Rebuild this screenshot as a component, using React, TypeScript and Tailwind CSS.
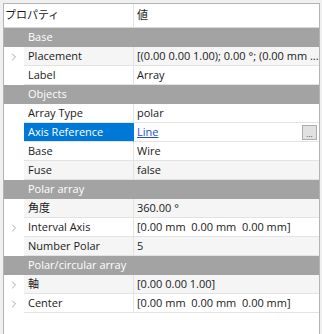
import { ChevronRight } from 'lucide-react'

type Row =
  | { kind: 'group'; label: string }
  | { kind: 'prop'; label: string; value: string; expand?: boolean; alt?: boolean; selected?: boolean; link?: boolean }

const rows: Row[] = [
  { kind: 'group', label: 'Base' },
  { kind: 'prop', label: 'Placement', value: '[(0.00 0.00 1.00); 0.00 °; (0.00 mm ...', expand: true, alt: true },
  { kind: 'prop', label: 'Label', value: 'Array' },
  { kind: 'group', label: 'Objects' },
  { kind: 'prop', label: 'Array Type', value: 'polar' },
  { kind: 'prop', label: 'Axis Reference', value: 'Line', selected: true, link: true },
  { kind: 'prop', label: 'Base', value: 'Wire' },
  { kind: 'prop', label: 'Fuse', value: 'false', alt: true },
  { kind: 'group', label: 'Polar array' },
  { kind: 'prop', label: '角度', value: '360.00 °', alt: true },
  { kind: 'prop', label: 'Interval Axis', value: '[0.00 mm  0.00 mm  0.00 mm]', expand: true },
  { kind: 'prop', label: 'Number Polar', value: '5', alt: true },
  { kind: 'group', label: 'Polar/circular array' },
  { kind: 'prop', label: '軸', value: '[0.00 0.00 1.00]', expand: true, alt: true },
  { kind: 'prop', label: 'Center', value: '[0.00 mm  0.00 mm  0.00 mm]', expand: true },
]

function PropRow({ row }: { row: Row }) {
  if (row.kind === 'group') {
    return (
      <div className="h-[19px] bg-[#a3a3a3] text-white flex items-center pl-[24px]">
        {row.label}
      </div>
    )
  }
  const bg = row.alt ? 'bg-[#f5f5f5]' : 'bg-white'
  return (
    <div className="h-[19px] flex">
      <div className="w-[20px] shrink-0 bg-white flex items-center justify-center text-[#8a8a8a]">
        {row.expand && <ChevronRight size={12} strokeWidth={1.5} />}
      </div>
      <div
        className={`w-[110px] shrink-0 flex items-center px-[4px] border-b border-r border-[#e3e3e3] ${
          row.selected ? 'bg-[#0078d7] text-white border-r-[#0078d7]' : `${bg} text-[#1a1a1a]`
        }`}
      >
        {row.label}
      </div>
      <div className={`flex-1 min-w-0 flex items-center pl-[3px] border-b border-[#e3e3e3] ${row.selected ? 'bg-white' : bg}`}>
        {row.link ? (
          <span className="text-[#1a4fd0] underline flex-1">{row.value}</span>
        ) : (
          <span className="flex-1 whitespace-pre overflow-hidden text-[#1a1a1a]">{row.value}</span>
        )}
        {row.selected && (
          <div className="w-[15px] h-[15px] mr-[2px] bg-[#e1e1e1] border border-[#adadad] flex items-end justify-center text-[8px] leading-[10px] text-[#444]">
            ...
          </div>
        )}
      </div>
    </div>
  )
}

export default function App() {
  return (
    <div
      className="w-[322px] h-[334px] bg-[#f0f0f0] pt-[3px] pl-[3px] pr-[2px] text-[11px]"
      style={{ fontFamily: '"Open Sans", "Noto Sans CJK JP", sans-serif' }}
    >
      <div className="h-full bg-white border-l border-t border-r border-[#b4b4b4] flex flex-col">
        <div className="h-[24px] flex border-b border-[#d9d9d9] text-[#1a1a1a]">
          <div className="w-[130px] shrink-0 flex items-center pl-[1px] border-r border-[#e3e3e3]">プロパティ</div>
          <div className="flex-1 flex items-center pl-[3px]">値</div>
        </div>
        {rows.map((r, i) => (
          <PropRow key={i} row={r} />
        ))}
      </div>
    </div>
  )
}
